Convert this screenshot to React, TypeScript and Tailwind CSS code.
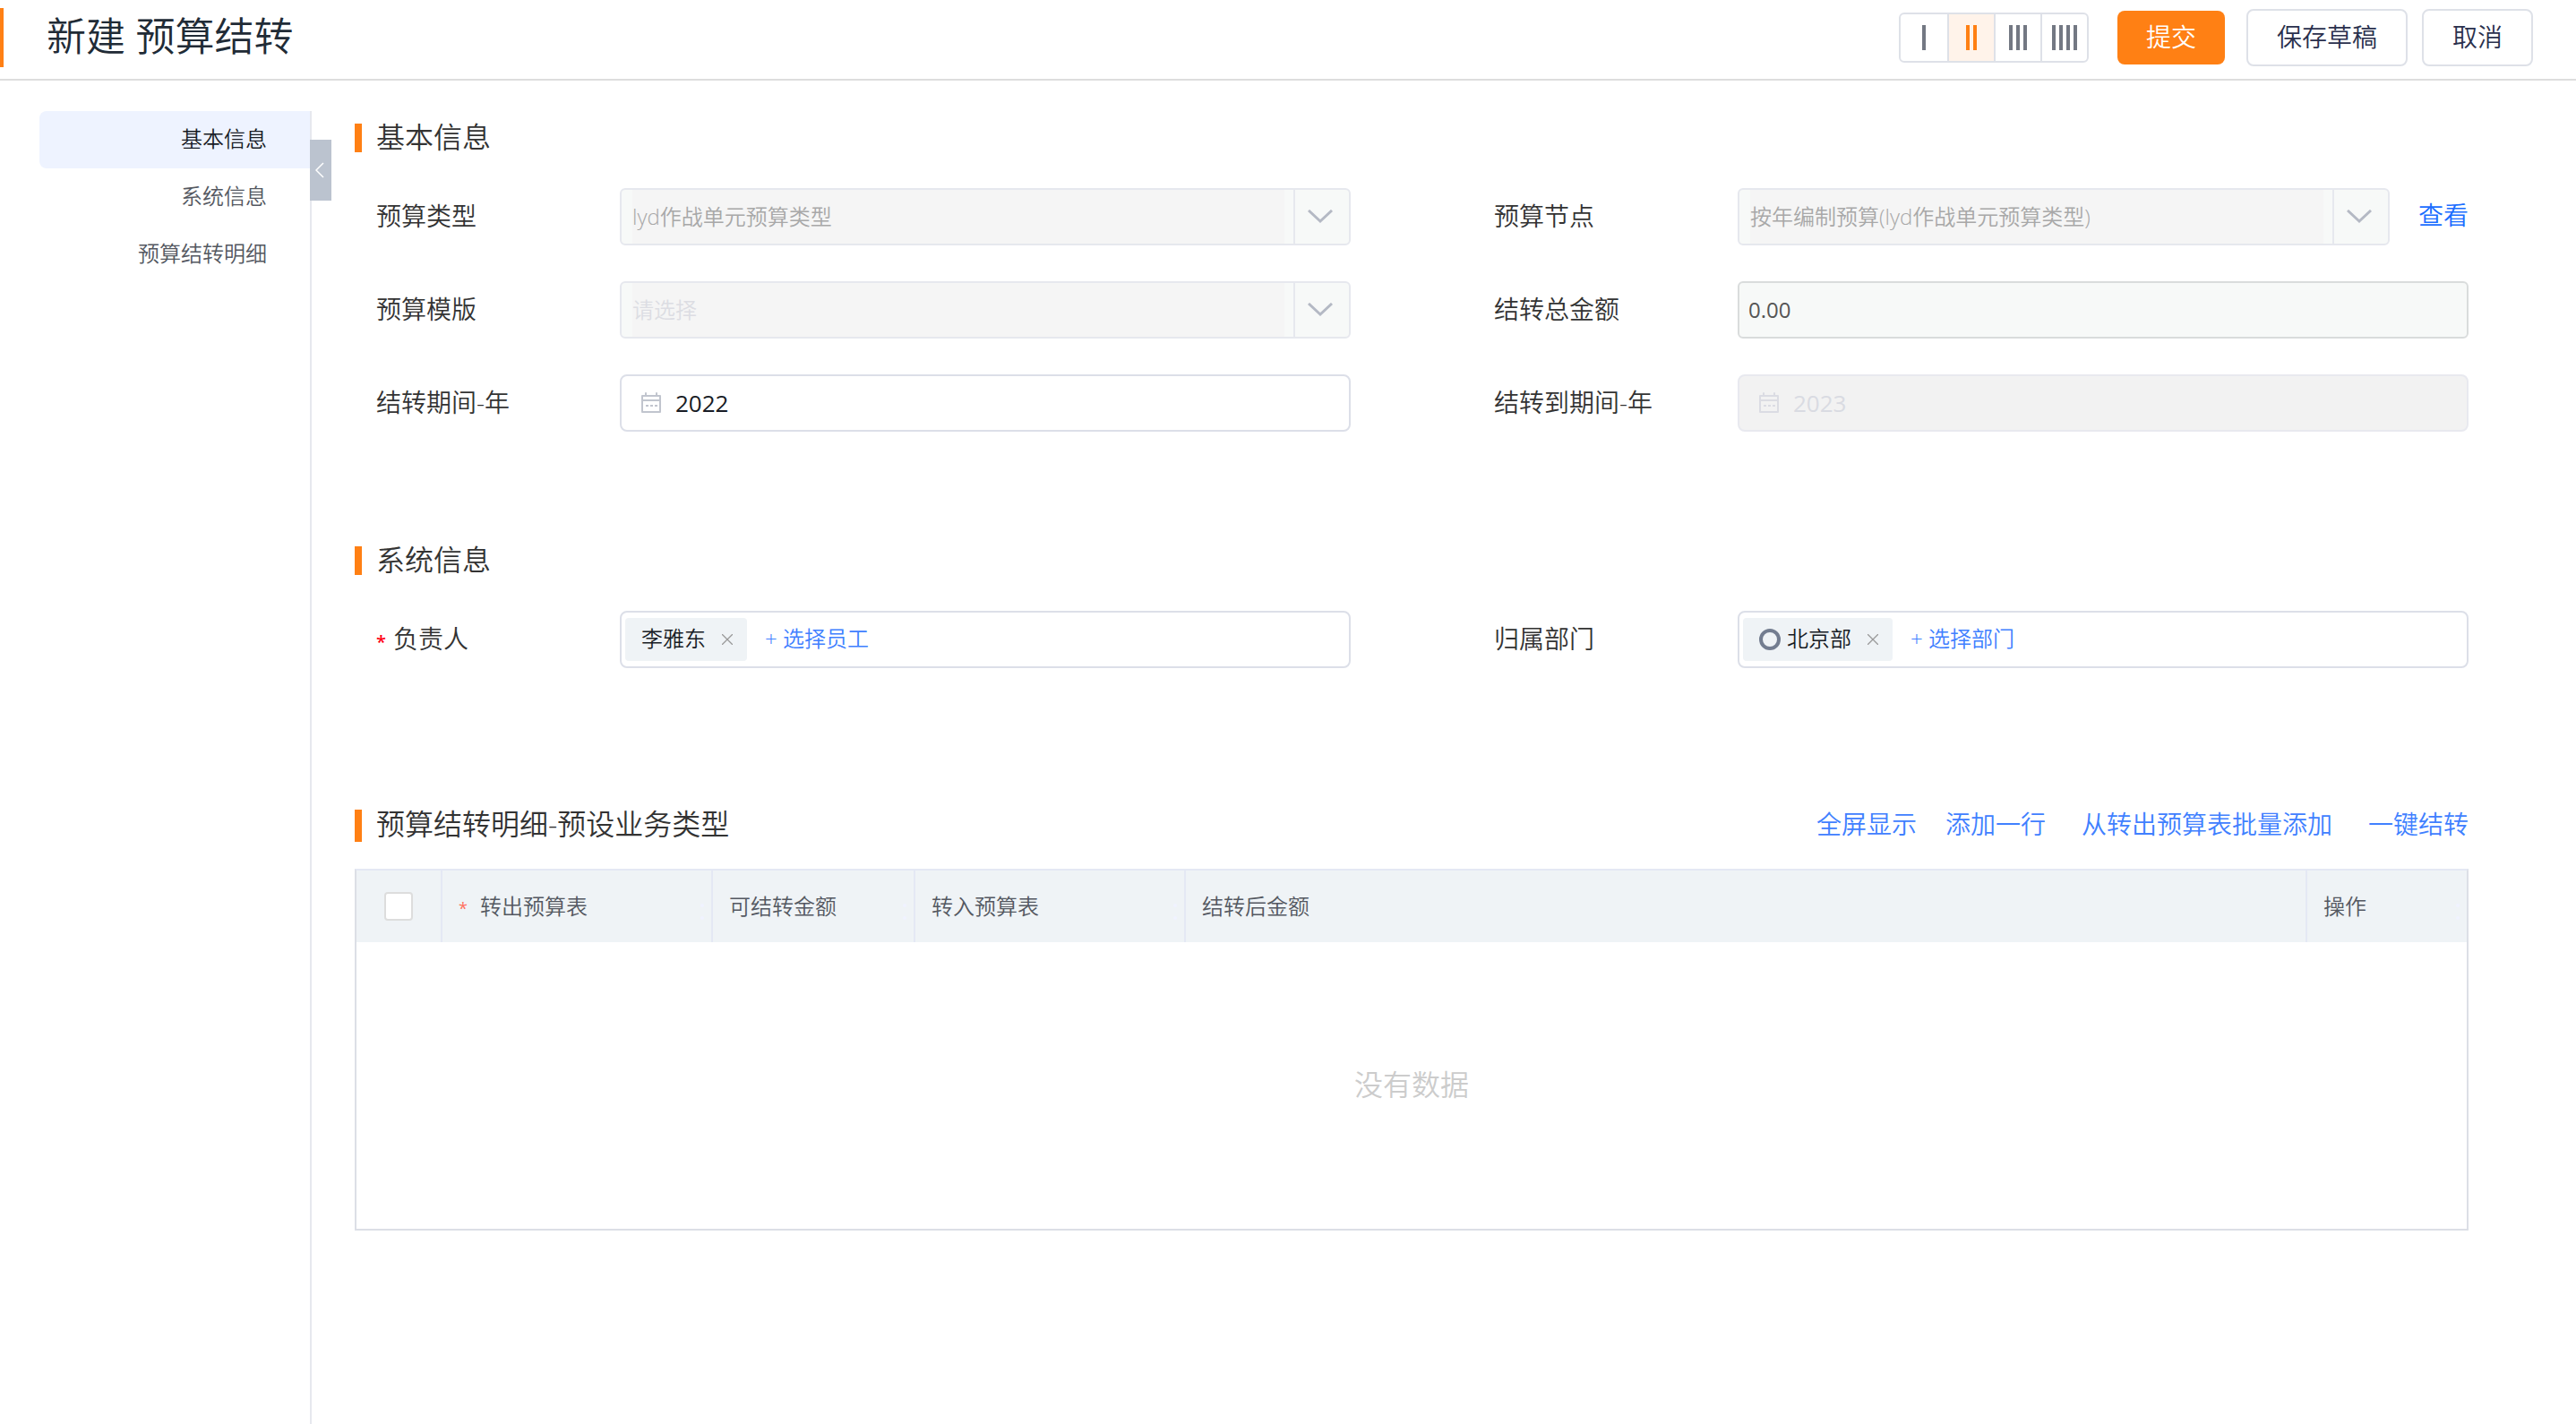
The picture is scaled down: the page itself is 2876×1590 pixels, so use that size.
import { useState, type ReactNode } from 'react'

const navItems = [
  { id: 'basic', label: '基本信息' },
  { id: 'system', label: '系统信息' },
  { id: 'detail', label: '预算结转明细' },
] as const

const detailActions = [
  { label: '全屏显示', className: '' },
  { label: '添加一行', className: 'ml-8' },
  { label: '从转出预算表批量添加', className: 'ml-10' },
  { label: '一键结转', className: 'ml-10' },
] as const

const layoutOptions = [1, 2, 3, 4] as const

function CalendarIcon({ className }: { className: string }) {
  return (
    <svg viewBox="0 0 22 24" fill="none" stroke="currentColor" strokeWidth="2" className={className} aria-hidden="true">
      <path d="M1 4h20v18H1z" strokeLinejoin="round" />
      <path d="M1 9h20" />
      <path d="M5 1v3M17 1v3" strokeLinecap="round" />
      <path d="M5 15h3M10 15h3M15 15h3" />
    </svg>
  )
}

function ChevronDown() {
  return (
    <svg viewBox="0 0 28 16" fill="none" stroke="currentColor" strokeWidth="3" className="h-4 w-7" aria-hidden="true">
      <path d="M1 1l13 12L27 1" />
    </svg>
  )
}

function CloseIcon() {
  return (
    <svg viewBox="0 0 12 12" fill="none" stroke="currentColor" strokeWidth="1.25" className="h-3 w-3" aria-hidden="true">
      <path d="M0 0l12 12M12 0L0 12" />
    </svg>
  )
}

function SectionTitle({ children }: { children: ReactNode }) {
  return (
    <h2 className="flex h-8 items-center text-[32px] leading-8 font-[350] text-[#333]">
      <span className="mr-4 h-8 w-2 bg-[#ff8014]" />
      <span className="pb-0.5">{children}</span>
    </h2>
  )
}

function Field({ id, label, required, children }: { id: string; label: string; required?: boolean; children: ReactNode }) {
  return (
    <div className="flex h-16 items-center">
      <label htmlFor={id} className="flex w-[272px] shrink-0 items-center pb-0.5 text-[28px] leading-10 text-[#333]">
        {required && <span className="mr-2 pt-2 text-xl leading-8 font-semibold text-[#ff0014]">*</span>}
        {label}
      </label>
      {children}
    </div>
  )
}

function DisabledSelect({ id, text, placeholder }: { id: string; text: string; placeholder?: boolean }) {
  return (
    <div className="flex h-16 min-w-0 flex-1 items-stretch rounded-md border-2 border-[#e6e8ee] bg-[#f7f9f8] pl-3">
      <select
        id={id}
        disabled
        className={`min-w-0 flex-1 appearance-none bg-[#f5f5f5] text-2xl disabled:opacity-100 ${
          placeholder ? 'text-[#dcdde3]' : 'text-[#a8a8a8]'
        }`}
      >
        <option>{text}</option>
      </select>
      <span className="ml-2.5 flex w-[62px] items-center justify-center border-l-2 border-[#e6e8ee] pr-1 text-[#b4b9c4]">
        <ChevronDown />
      </span>
    </div>
  )
}

function YearInput({ id, value, disabled }: { id: string; value: string; disabled?: boolean }) {
  return (
    <div
      className={`flex h-16 flex-1 items-center rounded-lg border-2 pl-[22px] ${
        disabled ? 'border-[#e8e9ef] bg-[#f2f2f2] text-[#d9dbe2]' : 'border-[#dcdfe8] bg-white text-[#181c25]'
      }`}
    >
      <CalendarIcon className={`mr-4 h-6 w-[22px] ${disabled ? 'text-[#dbdce3]' : 'text-[#c1c5ce]'}`} />
      <input
        id={id}
        defaultValue={value}
        disabled={disabled}
        className="h-full min-w-0 flex-1 bg-transparent text-[26px] font-normal outline-none"
      />
    </div>
  )
}

function Picker({ id, name, action, icon }: { id: string; name: string; action: string; icon?: ReactNode }) {
  return (
    <div className="flex h-16 flex-1 items-center rounded-lg border-2 border-[#dcdfe8] bg-white pl-1 text-2xl">
      <span className="flex h-12 items-center rounded bg-[#eff3f6] pr-4 pl-[18px] text-[#181c25]">
        {icon}
        <span className="pb-0.5">{name}</span>
        <button type="button" aria-label={`移除${name}`} className="ml-[18px] text-[#999]">
          <CloseIcon />
        </button>
      </span>
      <button id={id} type="button" className="ml-5 pb-0.5 text-[#4080ff]">
        + {action}
      </button>
    </div>
  )
}

function HeaderCell({ label, required, grip = true }: { label: string; required?: boolean; grip?: boolean }) {
  return (
    <th className="border-l-2 border-[#e4e8f4] pl-[18px] text-left font-[350]">
      <div className="flex items-center">
        {required && <span className="mr-3.5 pt-1 text-lg leading-8 font-normal text-[#ff6f5c]">*</span>}
        <span className="flex-1">{label}</span>
        {grip && (
          <span className="mr-2 flex flex-col gap-2.5 pt-3">
            <span className="h-1 w-1 rounded-full bg-[#f0f3ff]" />
            <span className="h-1 w-1 rounded-full bg-[#f0f3ff]" />
          </span>
        )}
      </div>
    </th>
  )
}

export default function App() {
  const [active, setActive] = useState<string>('basic')
  const [columns, setColumns] = useState<number>(2)

  return (
    <div className="flex min-h-screen flex-col bg-white font-['Open_Sans','Noto_Sans_CJK_SC',sans-serif] font-[350]">
      <header className="flex h-[90px] items-center border-b-2 border-[#ddd] pr-12">
        <span className="-mt-1 h-[66px] w-1 bg-[#ff8014]" />
        <h1 className="-mt-2 ml-12 flex-1 text-[44px] leading-[60px] font-[350] text-[#212b36]">新建 预算结转</h1>
        <div className="-mt-1 flex items-center">
          <div className="mr-8 flex h-14 overflow-hidden rounded-md border-2 border-[#dee1e8]">
            {layoutOptions.map((count) => (
              <button
                key={count}
                type="button"
                aria-label={`${count}列布局`}
                onClick={() => setColumns(count)}
                className={`flex w-[52px] items-center justify-center gap-1 border-[#dee1e8] not-first:border-l-2 ${
                  columns === count ? 'bg-[#fff3ea] text-[#ff8014]' : 'text-[#737883]'
                }`}
              >
                {layoutOptions.slice(0, count).map((bar) => (
                  <span key={bar} className="h-7 w-1 bg-current" />
                ))}
              </button>
            ))}
          </div>
          <button type="button" className="mr-6 h-[60px] rounded-lg bg-[#ff8014] px-8 pb-0.5 text-[28px] text-white">
            提交
          </button>
          <button type="button" className="mr-4 h-16 rounded-lg border-2 border-[#dee1e8] px-8 pb-0.5 text-[28px] text-[#2a304d]">
            保存草稿
          </button>
          <button type="button" className="h-16 rounded-lg border-2 border-[#dee1e8] px-8 pb-0.5 text-[28px] text-[#2a304d]">
            取消
          </button>
        </div>
      </header>

      <div className="flex flex-1 pt-[34px]">
        <aside className="relative w-[348px] shrink-0 border-r-2 border-[#e6e8ee] pl-11">
          <nav className="flex flex-col">
            {navItems.map((item) => (
              <a
                key={item.id}
                href={`#${item.id}`}
                onClick={() => setActive(item.id)}
                className={`flex h-16 items-center justify-end rounded-l-lg pr-12 pb-0.5 text-2xl ${
                  active === item.id ? 'bg-[#eef3ff] text-[#181c25]' : 'text-[#545861]'
                }`}
              >
                {item.label}
              </a>
            ))}
          </nav>
          <button
            type="button"
            aria-label="收起"
            className="absolute top-8 -right-6 flex h-[68px] w-6 items-center justify-center bg-[#bbc3cf] pr-0.5 text-white"
          >
            <svg viewBox="0 0 10 18" fill="none" stroke="currentColor" strokeWidth="1.5" className="h-[18px] w-2.5" aria-hidden="true">
              <path d="M9 1L1 9l8 8" />
            </svg>
          </button>
        </aside>

        <main className="min-w-0 flex-1 pt-3.5 pr-[120px] pl-12">
          <section id="basic">
            <SectionTitle>基本信息</SectionTitle>
            <div className="mt-10 grid grid-cols-2 gap-x-40 gap-y-10 pl-6">
              <Field id="budget-type" label="预算类型">
                <DisabledSelect id="budget-type" text="lyd作战单元预算类型" />
              </Field>
              <Field id="budget-node" label="预算节点">
                <DisabledSelect id="budget-node" text="按年编制预算(lyd作战单元预算类型)" />
                <a href="#node" className="ml-8 pb-1 text-[28px] leading-10 text-[#1a6dff]">
                  查看
                </a>
              </Field>
              <Field id="budget-template" label="预算模版">
                <DisabledSelect id="budget-template" text="请选择" placeholder />
              </Field>
              <Field id="total" label="结转总金额">
                <input
                  id="total"
                  readOnly
                  value="0.00"
                  className="h-16 min-w-0 flex-1 rounded-md border-2 border-[#d9dcdc] bg-[#f7f9f8] px-2.5 pb-0.5 text-2xl font-normal text-[#555] outline-none"
                />
              </Field>
              <Field id="year-from" label="结转期间-年">
                <YearInput id="year-from" value="2022" />
              </Field>
              <Field id="year-to" label="结转到期间-年">
                <YearInput id="year-to" value="2023" disabled />
              </Field>
            </div>
          </section>

          <section id="system" className="mt-32">
            <SectionTitle>系统信息</SectionTitle>
            <div className="mt-10 grid grid-cols-2 gap-x-40 pl-6">
              <Field id="owner" label="负责人" required>
                <Picker id="owner" name="李雅东" action="选择员工" />
              </Field>
              <Field id="department" label="归属部门">
                <Picker
                  id="department"
                  name="北京部"
                  action="选择部门"
                  icon={<span className="mr-[7px] h-6 w-6 rounded-full border-4 border-[#737d90]" />}
                />
              </Field>
            </div>
          </section>

          <section id="detail" className="mt-[158px]">
            <div className="flex h-9 items-center">
              <h2 className="flex flex-1 items-center text-[32px] leading-9 font-[350] text-[#333]">
                <span className="mr-4 h-9 w-2 bg-[#ff8014]" />
                <span className="-mt-1">预算结转明细-预设业务类型</span>
              </h2>
              {detailActions.map((action) => (
                <button key={action.label} type="button" className={`-mt-1 text-[28px] leading-9 text-[#4080ff] ${action.className}`}>
                  {action.label}
                </button>
              ))}
            </div>

            <div className="mt-[30px] border-2 border-x-[#dcdfe6] border-t-[#e4e8f4] border-b-[#dcdfe6]">
              <table className="w-full table-fixed border-separate border-spacing-0 text-2xl text-[#545861]">
                <colgroup>
                  <col className="w-[94px]" />
                  <col className="w-[302px]" />
                  <col className="w-[226px]" />
                  <col className="w-[302px]" />
                  <col />
                  <col className="w-[180px]" />
                </colgroup>
                <thead>
                  <tr className="h-20 bg-[#eff3f6]">
                    <th className="align-middle">
                      <input
                        type="checkbox"
                        aria-label="全选"
                        className="mx-auto block h-8 w-8 appearance-none rounded border-2 border-[#ddd] bg-white"
                      />
                    </th>
                    <HeaderCell label="转出预算表" required />
                    <HeaderCell label="可结转金额" />
                    <HeaderCell label="转入预算表" />
                    <HeaderCell label="结转后金额" grip={false} />
                    <HeaderCell label="操作" />
                  </tr>
                </thead>
                <tbody>
                  <tr className="h-80">
                    <td colSpan={6} className="pb-0.5 text-center text-[32px] text-[#ccc]">
                      没有数据
                    </td>
                  </tr>
                </tbody>
              </table>
            </div>
          </section>
        </main>
      </div>
    </div>
  )
}
